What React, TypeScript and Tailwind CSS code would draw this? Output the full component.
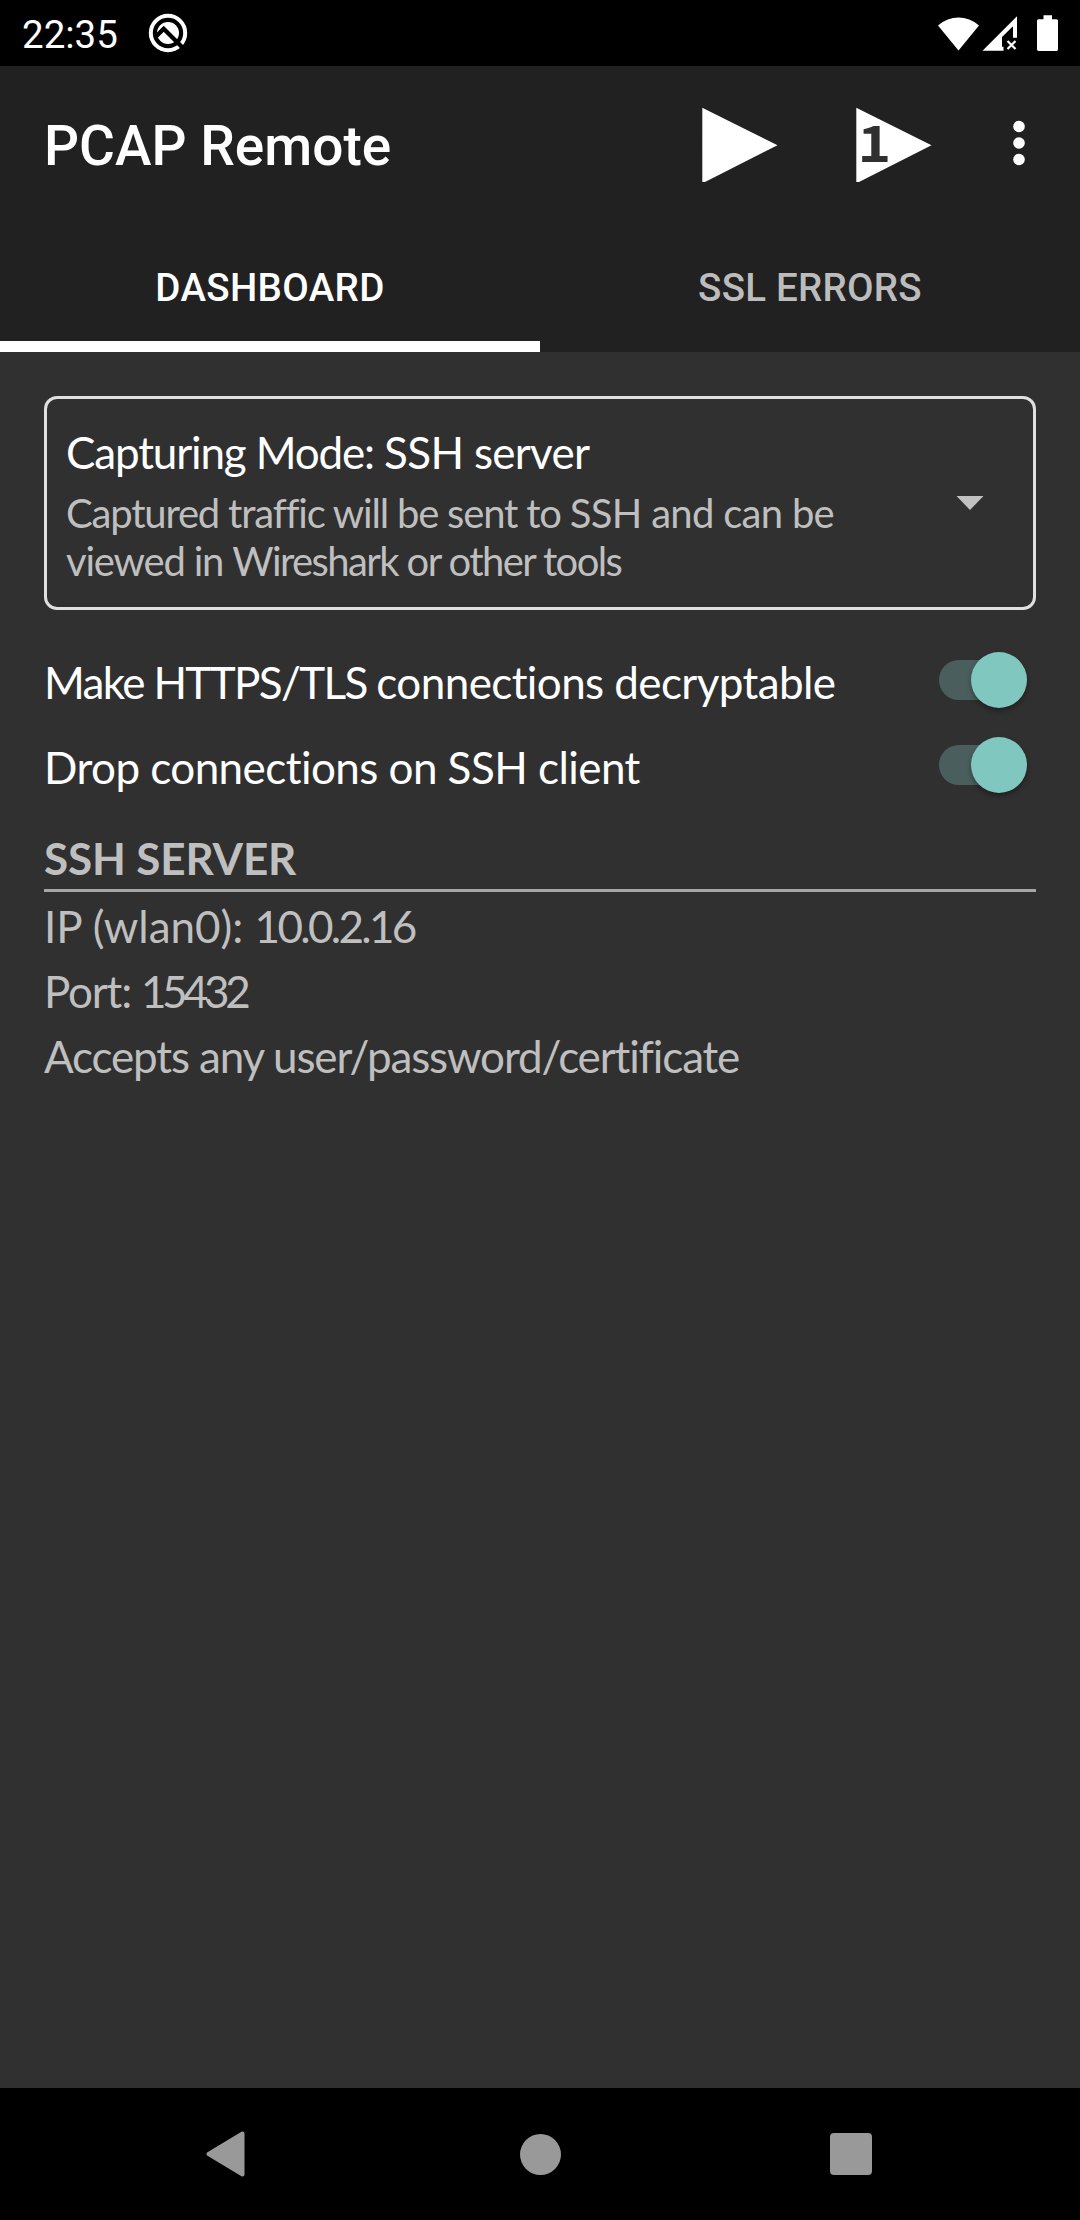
import React from "react";

function StatusBar() {
  return (
    <div className="flex h-[66px] shrink-0 items-center justify-between bg-black pl-[22px] pr-[20px] text-white">
      <div className="flex items-center">
        <span className="w-[126px] pt-[2px] font-[Roboto] text-[38.5px] leading-[45px]">22:35</span>
        <svg width="40" height="40" viewBox="-20 -20 40 40" className="block">
          <circle r="17.2" fill="none" stroke="#fff" strokeWidth="4" />
          <circle r="11" fill="#fff" />
          <path d="M-13 4.5 L-4.3 -4.2 L18 18" fill="none" stroke="#000" strokeWidth="4.4" />
        </svg>
      </div>
      <svg width="122" height="40" viewBox="0 0 122 40" fill="#fff" className="block">
        <path d="M0 12.5 C12 1.7 29 1.7 41 12.5 L20.5 37.5 Z" />
        <path d="M44.5 37.7 L79 3.3 V24.7 H75 V13.2 L64 24 V33.7 H65.5 V37.7 Z" />
        <path d="M69.5 28 L77.5 36 M77.5 28 L69.5 36" stroke="#fff" strokeWidth="2.2" />
        <path d="M105.5 2.3 H114 V6.3 H118.5 Q120 6.3 120 7.8 V36.3 Q120 38 118.5 38 H100.5 Q99 38 99 36.3 V7.8 Q99 6.3 100.5 6.3 H105.5 Z" />
      </svg>
    </div>
  );
}

function Toolbar() {
  return (
    <div className="flex h-[154px] items-center pl-[44px] pr-[55px]">
      <h1 className="grow pt-[6px] font-[Roboto] text-[55px] font-medium leading-[64px]">PCAP Remote</h1>
      <div className="flex items-center pt-[4px]">
        <svg width="76" height="76" viewBox="0 0 76 76" className="mr-[78px] block">
          <path d="M0.3 0.8 L75.5 38.2 L3 75 H0.3 Z" fill="#fff" />
        </svg>
        <svg width="76" height="76" viewBox="0 0 76 76" className="mr-[81px] block overflow-visible">
          <path d="M0.3 0.8 L75.5 38.2 L3 75 H0.3 Z" fill="#fff" />
          <text
            transform="translate(1.6 55) scale(1.13 1)"
            fontSize="50.5"
            fill="#303030"
            className="font-['Noto_Sans_CJK_SC',sans-serif] font-bold"
          >
            1
          </text>
        </svg>
      </div>
      <svg width="12" height="46" viewBox="0 0 12 46" fill="#fff" className="block">
        <circle cx="6" cy="6.5" r="5.8" />
        <circle cx="6" cy="23" r="5.8" />
        <circle cx="6" cy="39.5" r="5.8" />
      </svg>
    </div>
  );
}

function Tabs() {
  return (
    <div className="grid h-[132px] grid-cols-2 text-center font-[Roboto] text-[38.5px] font-medium leading-[45px]">
      <div className="border-b-[11px] border-white pt-[45px] tracking-[0.35px]">DASHBOARD</div>
      <div className="pt-[45px] tracking-[0.25px] text-[#bcbcbc]">SSL ERRORS</div>
    </div>
  );
}

function SwitchRow({ children }: { children: React.ReactNode }) {
  return (
    <div className="flex h-[85px] items-center justify-between pr-[9px] text-[44px] leading-[54px]">
      {children}
      <div className="mb-[3px] flex h-[40px] w-[88px] items-center justify-end rounded-full bg-gradient-to-r from-[#4a5f5d] from-60% to-transparent to-60%">
        <div className="h-[56px] w-[56px] shrink-0 rounded-full bg-[#80c7c0] shadow-[0_3px_5px_rgba(0,0,0,0.35)]" />
      </div>
    </div>
  );
}

export default function App() {
  return (
    <div className="flex h-[2220px] w-[1080px] flex-col overflow-hidden bg-[#303030] font-[Lato,sans-serif] text-white">
      <StatusBar />
      <header className="shrink-0 bg-[#212121]">
        <Toolbar />
        <Tabs />
      </header>
      <main className="flex grow flex-col whitespace-nowrap px-[44px] pt-[44px]">
        <section className="flex h-[214px] items-center justify-between rounded-[13px] border-[3px] border-[#e0e0e0] pl-[19px] pr-[49px]">
          <div className="pt-[3px]">
            <p className="text-[44px] leading-[54px] tracking-[-1.15px]">
              Capturing Mode: <span className="tracking-[-0.7px]">SSH server</span>
            </p>
            <div className="mt-[10px] text-[40px] leading-[48px] text-[#bfbfbf]">
              <p className="tracking-[-1.2px]">
                Captured traffic will be sent to <span className="tracking-[-0.7px]">SSH and can be</span>
              </p>
              <p className="tracking-[-1.2px]">
                viewed in <span className="tracking-[-1.6px]">Wireshark or other tools</span>
              </p>
            </div>
          </div>
          <svg width="28" height="14" viewBox="0 0 28 14" className="block">
            <path d="M0.5 0 H27.5 L14 14 Z" fill="#c1c1c1" />
          </svg>
        </section>
        <div className="mt-[29px]">
          <SwitchRow>
            <span className="tracking-[-1.65px]">
              Make HTTPS/TLS <span className="tracking-[-0.6px]">connections decryptable</span>
            </span>
          </SwitchRow>
          <SwitchRow>
            <span className="tracking-[-0.56px]">Drop connections on SSH client</span>
          </SwitchRow>
        </div>
        <h2 className="mt-[22px] border-b-[3px] border-[#a6a6a6] pb-[4px] text-[44px] font-bold leading-[54px] tracking-[-0.15px] text-[#bfbfbf]">
          SSH SERVER
        </h2>
        <div className="mt-[2px] text-[44px] leading-[65px] text-[#bfbfbf]">
          <p>
            IP (wlan0): <span className="tracking-[-2.7px]">10.0.2.16</span>
          </p>
          <p className="tracking-[-1.2px]">
            Port: <span className="tracking-[-4.5px]">15432</span>
          </p>
          <p className="tracking-[-1.15px]">Accepts any user/password/certificate</p>
        </div>
      </main>
      <nav className="flex h-[132px] shrink-0 items-center justify-between bg-black pl-[206px] pr-[208px]">
        <svg width="39" height="46" viewBox="0 0 39 46" className="block">
          <path
            d="M36.5 2.5 V43.5 L2.5 23 Z"
            fill="#999"
            stroke="#999"
            strokeWidth="4"
            strokeLinejoin="round"
          />
        </svg>
        <div className="ml-[5px] h-[41px] w-[41px] rounded-full bg-[#999]" />
        <div className="h-[42px] w-[42px] rounded-[4px] bg-[#999]" />
      </nav>
    </div>
  );
}
